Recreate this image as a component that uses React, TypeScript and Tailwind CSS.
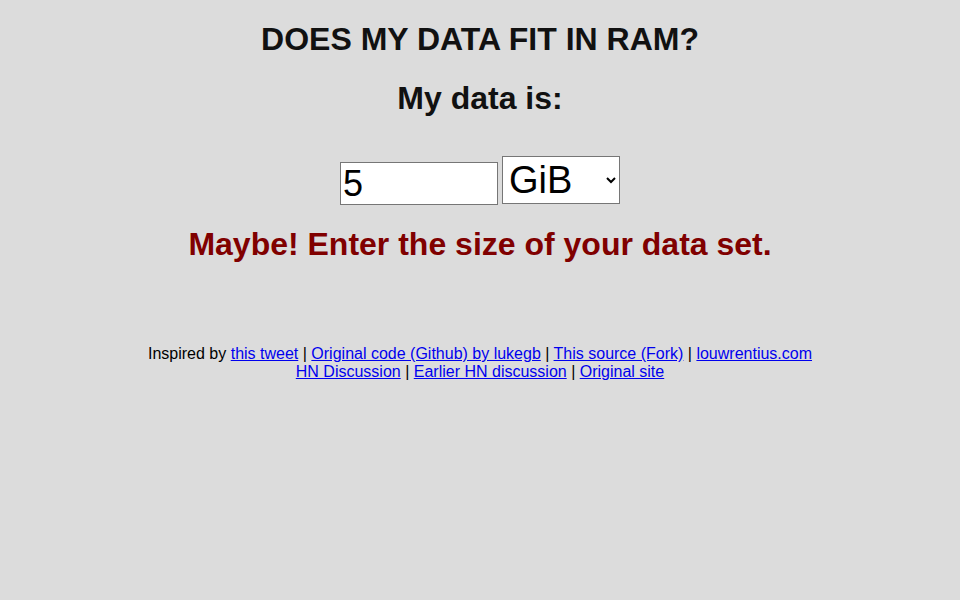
const links = {
  top: ["this tweet", "Original code (Github) by lukegb", "This source (Fork)", "louwrentius.com"],
  bottom: ["HN Discussion", "Earlier HN discussion", "Original site"],
};

const LinkRow = ({ items }: { items: string[] }) => (
  <>
    {items.map((label, i) => (
      <span key={label}>
        {i > 0 && " | "}
        <a href="#" className="text-[#0000ee] underline">
          {label}
        </a>
      </span>
    ))}
  </>
);

export default function App() {
  return (
    <div
      className="min-h-screen w-full bg-[#dcdcdc] text-center text-[#111111]"
      style={{ fontFamily: '"Liberation Sans", Arial, sans-serif' }}
    >
      <div className="flex flex-col items-center pt-[21px]">
        <h1 className="text-[32px] font-bold leading-[37px]">DOES MY DATA FIT IN RAM?</h1>
        <h2 className="mt-[22px] text-[32px] font-bold leading-[37px]">My data is:</h2>

        <div className="mt-[39px] flex items-end gap-[4px]">
          <input
            type="text"
            defaultValue="5"
            className="mb-[-1px] h-[43px] w-[158px] border border-[#767676] bg-white px-[2px] text-[36px] leading-none text-black outline-none"
          />
          <select
            defaultValue="GiB"
            className="h-[48px] w-[118px] border border-[#767676] bg-white pl-[2px] pr-[4px] text-[38px] text-black"
          >
            <option>bytes</option>
            <option>KiB</option>
            <option>MiB</option>
            <option>GiB</option>
            <option>TiB</option>
            <option>PiB</option>
          </select>
        </div>

        <p className="mt-[22px] text-[32px] font-bold leading-[37px] text-[#800000]">
          Maybe! Enter the size of your data set.
        </p>

        <footer className="mt-[82px] text-[16px] leading-[18px] text-black">
          Inspired by <LinkRow items={links.top} />
          <br />
          <LinkRow items={links.bottom} />
        </footer>
      </div>
    </div>
  );
}
